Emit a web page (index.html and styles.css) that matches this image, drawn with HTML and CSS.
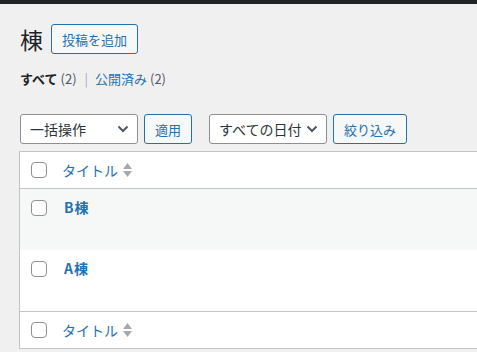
FILE: index.html
```html
<!DOCTYPE html>
<html lang="ja">
<head>
<meta charset="utf-8">
<link rel="stylesheet" href="styles.css">
</head>
<body>
<div class="topbar"></div>
<div class="wrap">
  <div class="title-row">
    <h1 class="page-title">棟</h1>
    <a class="btn title-action">投稿を追加</a>
  </div>
  <ul class="subsubsub">
    <li class="current">すべて <span class="count">(2)</span></li>
    <li class="sep">|</li>
    <li><a class="link">公開済み <span class="count-link">(2)</span></a></li>
  </ul>
  <div class="tablenav">
    <div class="actions">
      <div class="select">一括操作<svg class="chev" width="12" height="8" viewBox="0 0 12 8"><path d="M1.5 1.5 L6 6 L10.5 1.5" fill="none" stroke="#50575e" stroke-width="2"/></svg></div>
      <a class="btn">適用</a>
    </div>
    <div class="actions">
      <div class="select">すべての日付<svg class="chev" width="12" height="8" viewBox="0 0 12 8"><path d="M1.5 1.5 L6 6 L10.5 1.5" fill="none" stroke="#50575e" stroke-width="2"/></svg></div>
      <a class="btn">絞り込み</a>
    </div>
  </div>
  <div class="table">
    <div class="row head">
      <div class="check"><span class="cb"></span></div>
      <div class="col-title"><a class="sort-link">タイトル<svg class="sort" width="9" height="14" viewBox="0 0 9 14"><path d="M4.5 0 L9 6 L0 6 Z" fill="#a7aaad"/><path d="M4.5 14 L9 8 L0 8 Z" fill="#a7aaad"/></svg></a></div>
    </div>
    <div class="row item alt">
      <div class="check"><span class="cb"></span></div>
      <div class="col-title"><a class="row-title">B棟</a></div>
    </div>
    <div class="row item">
      <div class="check"><span class="cb"></span></div>
      <div class="col-title"><a class="row-title">A棟</a></div>
    </div>
    <div class="row foot">
      <div class="check"><span class="cb"></span></div>
      <div class="col-title"><a class="sort-link">タイトル<svg class="sort" width="9" height="14" viewBox="0 0 9 14"><path d="M4.5 0 L9 6 L0 6 Z" fill="#a7aaad"/><path d="M4.5 14 L9 8 L0 8 Z" fill="#a7aaad"/></svg></a></div>
    </div>
  </div>
</div>
</body>
</html>
```

FILE: styles.css
```css
html, body {
  margin: 0;
  padding: 0;
}
body {
  background: #f0f0f1;
  font-family: "Noto Sans CJK JP", "Noto Sans", sans-serif;
  font-size: 13px;
  color: #3c434a;
  overflow: hidden;
  width: 477px;
  height: 352px;
}
.topbar {
  height: 4px;
  background: #1d2327;
}
.wrap {
  padding: 20px 0 0 20px;
}
.title-row {
  display: flex;
  align-items: center;
  height: 30px;
}
.page-title {
  margin: 0;
  font-size: 23px;
  font-weight: 400;
  line-height: 30px;
  color: #1d2327;
}
.btn {
  display: inline-flex;
  align-items: center;
  box-sizing: border-box;
  height: 30px;
  padding: 0 10px;
  border: 1px solid #2271b1;
  border-radius: 3px;
  background: #f6f7f7;
  color: #2271b1;
  font-size: 13px;
  line-height: 1;
}
.title-action {
  margin-left: 8px;
}
.subsubsub {
  list-style: none;
  margin: 15px 0 0;
  padding: 0;
  display: flex;
  line-height: 20px;
  font-size: 13px;
}
.subsubsub .current {
  font-weight: 700;
  color: #1d2327;
}
.count {
  font-weight: 400;
  color: #50575e;
}
.sep {
  color: #a7aaad;
  margin: 0 7px 0 8px;
}
.link {
  color: #2271b1;
}
.count-link {
  color: #50575e;
}
.tablenav {
  display: flex;
  margin-top: 25px;
  height: 30px;
}
.actions {
  display: flex;
  gap: 6px;
  margin-right: 17px;
}
.select {
  box-sizing: border-box;
  width: 118px;
  height: 30px;
  border: 1px solid #8c8f94;
  border-radius: 3px;
  background: #fff;
  color: #2c3338;
  font-size: 14px;
  display: flex;
  align-items: center;
  justify-content: space-between;
  padding: 0 8px 0 9px;
}
.chev {
  display: block;
}
.table {
  margin-top: 7px;
  margin-left: -1px;
  width: 700px;
  border: 1px solid #c3c4c7;
  background: #fff;
}
.row {
  display: flex;
}
.row.head {
  height: 36px;
  align-items: center;
  border-bottom: 1px solid #c3c4c7;
}
.row.foot {
  height: 36px;
  align-items: center;
  border-top: 1px solid #c3c4c7;
}
.row.item {
  height: 61px;
  align-items: flex-start;
}
.row.alt {
  background: #f6f7f7;
}
.check {
  width: 32px;
  padding-left: 11px;
  box-sizing: border-box;
  display: flex;
}
.row.item .check {
  padding-top: 11px;
}
.cb {
  box-sizing: border-box;
  width: 16px;
  height: 16px;
  border: 1px solid #8c8f94;
  border-radius: 4px;
  background: #fff;
}
.col-title {
  padding-left: 10px;
}
.row.item .col-title {
  padding-top: 8px;
  padding-left: 12px;
}
.sort-link {
  color: #2271b1;
  font-size: 14px;
  display: flex;
  align-items: center;
  line-height: 20px;
}
.sort {
  margin-left: 5px;
}
.row-title {
  color: #2271b1;
  font-weight: 700;
  font-size: 14px;
  line-height: 20px;
  letter-spacing: 1px;
}
```
